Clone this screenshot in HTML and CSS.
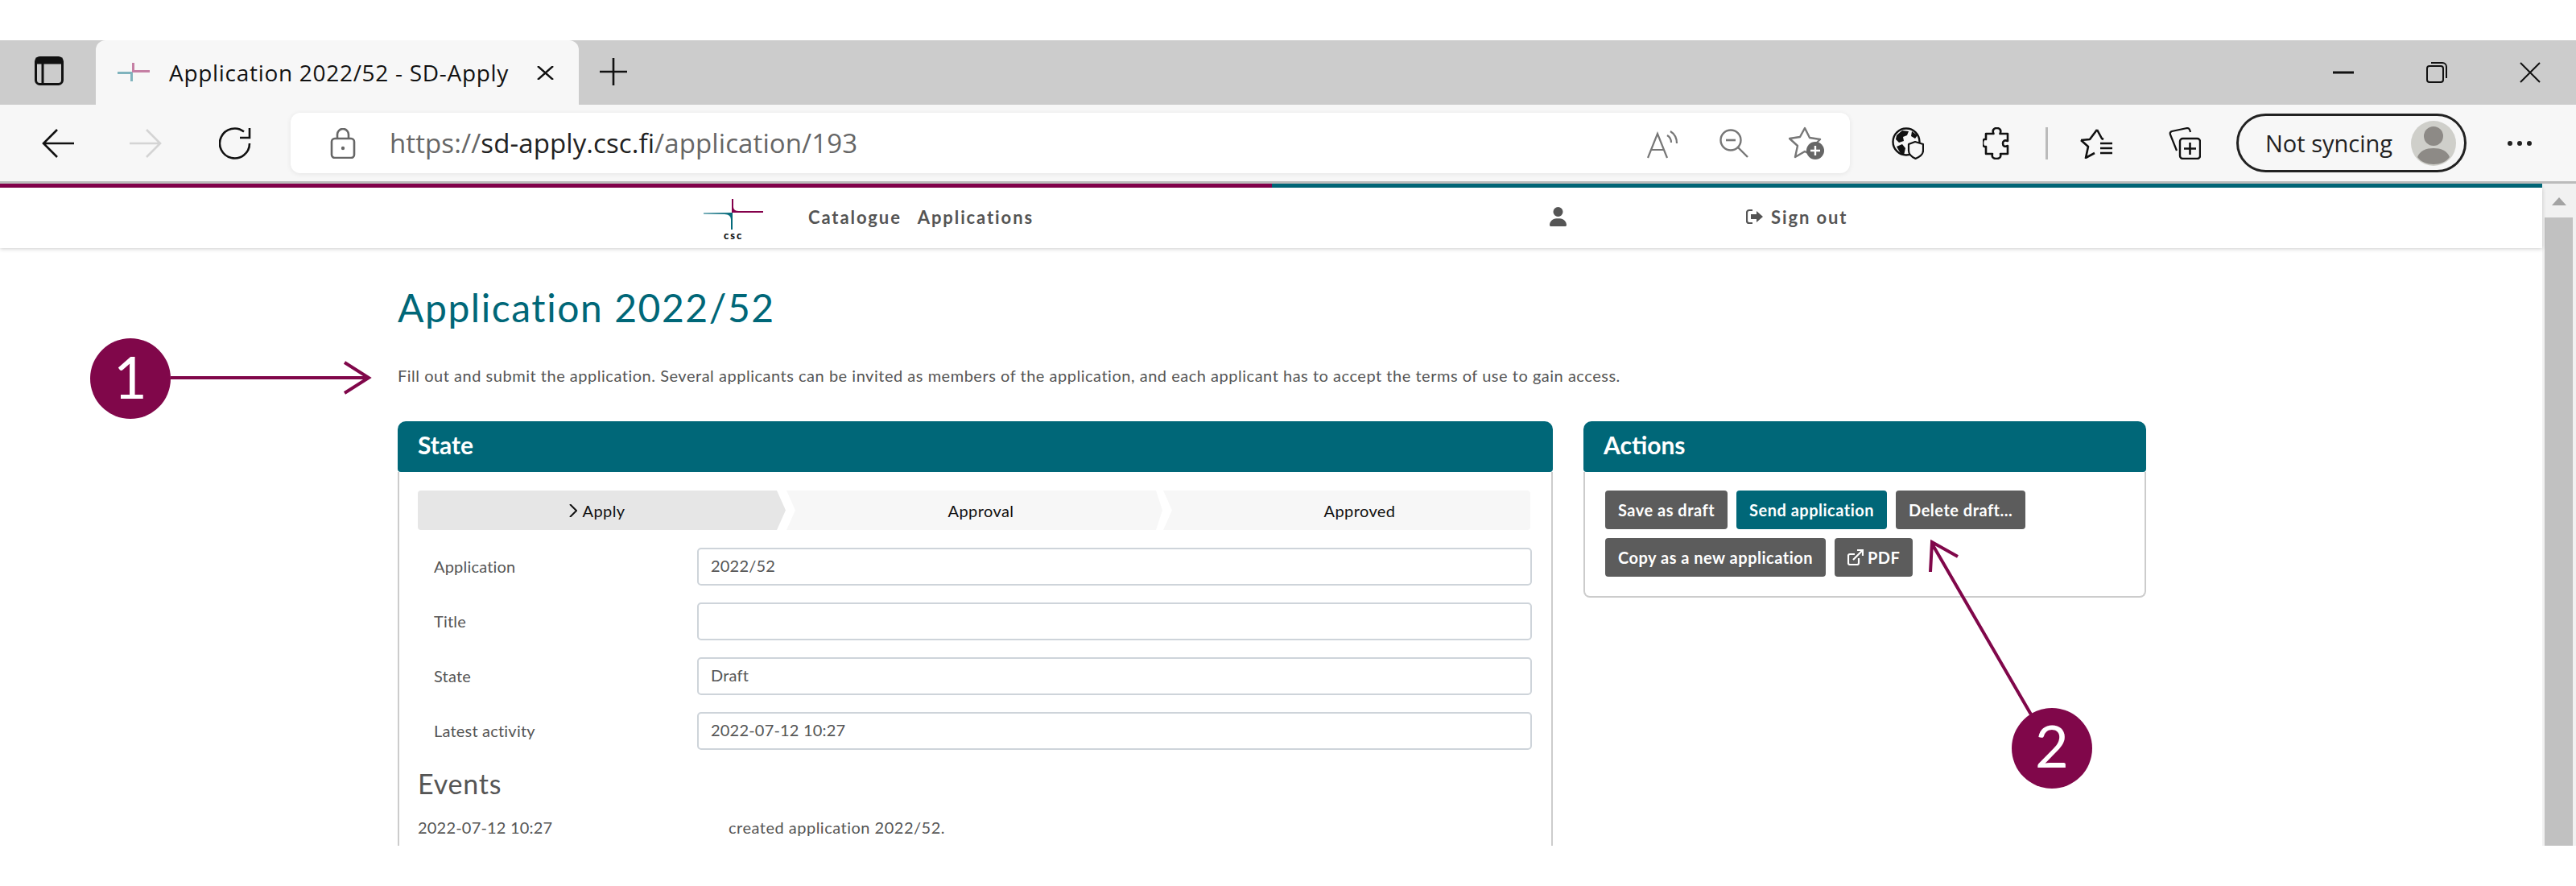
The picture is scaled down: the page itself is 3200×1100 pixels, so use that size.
FILE: index.html
```html
<!DOCTYPE html>
<html lang="en">
<head>
    <meta charset="UTF-8">
    <title>Application 2022/52 - SD-Apply</title>
    <link rel="stylesheet" href="styles.css">
</head>
<body>
    <div class="browser">
        <div class="tabstrip">
            <div class="tab-side">
                <svg class="ico" width="36" height="36" viewBox="0 0 36 36"><rect x="1.5" y="1.5" width="33" height="33" rx="5" fill="none" stroke="#111" stroke-width="3"/><rect x="1.5" y="1.5" width="33" height="8" fill="#111"/><path d="M10 9v25" stroke="#111" stroke-width="3"/></svg>
            </div>
            <div class="tab">
                <svg class="favicon" width="40" height="24" viewBox="0 0 40 24"><path d="M0 11h19v12h-3V14H0z" fill="#7fb3bd"/><path d="M18 0h3v9h19v3H18z" fill="#c57fa4"/></svg>
                <span class="tab-title">Application 2022/52 - SD-Apply</span>
                <svg class="tab-close" width="21" height="17" viewBox="0 0 21 17"><path d="M1 0l19 17M20 0L1 17" stroke="#111" stroke-width="2.4"/></svg>
            </div>
            <svg class="new-tab" width="34" height="34" viewBox="0 0 34 34"><path d="M0 17h34M17 0v34" stroke="#111" stroke-width="2.6"/></svg>
            <div class="win-controls">
                <svg width="26" height="4" viewBox="0 0 26 4"><path d="M0 2h26" stroke="#111" stroke-width="3"/></svg>
                <svg width="26" height="26" viewBox="0 0 26 26"><rect x="1" y="5" width="20" height="20" rx="3" fill="none" stroke="#111" stroke-width="2"/><path d="M6 1h14a5 5 0 0 1 5 5v14" fill="none" stroke="#111" stroke-width="2"/></svg>
                <svg width="26" height="26" viewBox="0 0 26 26"><path d="M1 1l24 24M25 1L1 25" stroke="#111" stroke-width="2"/></svg>
            </div>
        </div>
        <div class="toolbar">
            <svg class="back" width="40" height="36" viewBox="0 0 40 36"><path d="M40 18H2M19 1L2 18l17 17" fill="none" stroke="#111" stroke-width="2.6"/></svg>
            <svg class="forward" width="40" height="36" viewBox="0 0 40 36"><path d="M0 18h38M21 1l17 17-17 17" fill="none" stroke="#d4d4d4" stroke-width="2.6"/></svg>
            <svg class="reload" width="40" height="40" viewBox="0 0 40 40"><path d="M38 20A18.5 18.5 0 1 1 31 5.500" fill="none" stroke="#111" stroke-width="2.6"/><path d="M38 1v12H26" fill="none" stroke="#111" stroke-width="2.6"/></svg>
            <div class="address">
                <svg class="lock" width="32" height="38" viewBox="0 0 32 38"><rect x="2" y="13" width="28" height="24" rx="4" fill="none" stroke="#666" stroke-width="2.6"/><path d="M9 13V8a7 7 0 0 1 14 0v5" fill="none" stroke="#666" stroke-width="2.6"/><circle cx="16" cy="25" r="2.200" fill="#666"/></svg>
                <span class="url">https://<b>sd-apply.csc.fi</b>/application/193</span>
                <div class="address-icons">
                    <svg width="40" height="38" viewBox="0 0 40 38"><path d="M1 37L13 7l12 30M5 27h16" fill="none" stroke="#777" stroke-width="2.200"/><path d="M25 9q5 3 5 9M29 4q8 5 8 15" fill="none" stroke="#777" stroke-width="2.200"/></svg>
                    <svg width="36" height="36" viewBox="0 0 36 36"><circle cx="14" cy="14" r="12.500" fill="none" stroke="#777" stroke-width="2.400"/><path d="M23 23l12 12" stroke="#777" stroke-width="2.400"/><path d="M8 14h12" stroke="#777" stroke-width="2.600"/></svg>
                    <svg width="44" height="42" viewBox="0 0 44 42"><path d="M20 2l6 12 13 2-9 9 2 5-6 4-6-3-12 7 3-14-10-9 13-2z" fill="none" stroke="#777" stroke-width="2.400" stroke-linejoin="round"/><circle cx="33" cy="30" r="11" fill="#666"/><path d="M33 24v12M27 30h12" stroke="#fff" stroke-width="2.400"/></svg>
                </div>
            </div>
            <div class="tool-icons">
                <svg width="40" height="40" viewBox="0 0 40 40"><circle cx="18" cy="18" r="16.500" fill="none" stroke="#111" stroke-width="2.400"/><path d="M6 10l7-6 8 1-2 5-5 2 1 5-6 2-4-4zM6 24l7-3 4 5-2 9-5-4zM25 5l7 5-3 4-5-3z" fill="#111"/><path d="M29 18l10 3v8q0 6-9.500 10Q21 35 21 29v-8z" fill="#f7f7f7" stroke="#111" stroke-width="2.200" stroke-linejoin="round"/></svg>
                <svg width="34" height="40" viewBox="0 0 34 40"><path d="M11 8h2.500c-2-4 0-7 4-7s6 3 4 7H31v9c-4-1.500-6 0-6 3s2 5 6 3v10H22c1 4-1 6-5 6s-6-2-5-6H4v-9c-3 1-4-2-4-4.500S1 14 4 15V8z" fill="none" stroke="#111" stroke-width="2.600" stroke-linejoin="round"/></svg>
                <span class="sep"></span>
                <svg width="40" height="38" viewBox="0 0 40 38"><path d="M21 2l6 11 2 1M1 15l11-1 9-12M1 15l9 8-3 14 11-6" fill="none" stroke="#111" stroke-width="2.600" stroke-linejoin="round"/><path d="M25 19h15M25 25h15M25 31h15" stroke="#111" stroke-width="2.600"/></svg>
                <svg class="collections" width="40" height="40" viewBox="0 0 40 40"><path d="M10 29L2 9q-1-3 2-4l19-4q3 0 4 5" fill="none" stroke="#111" stroke-width="2.200"/><rect x="14" y="14" width="25" height="25" rx="3.500" fill="none" stroke="#111" stroke-width="2.400"/><path d="M26.500 19v15M19 26.500h15" stroke="#111" stroke-width="2.600"/></svg>
                <div class="sync-pill">
                    <span>Not syncing</span>
                    <svg width="58" height="58" viewBox="0 0 58 58"><circle cx="29" cy="29" r="28" fill="#cfcfca"/><circle cx="29" cy="20" r="12" fill="#8d8a86"/><path d="M9 46c3-8 11-11 20-11s17 3 20 11c-4 6-12 9-20 9S13 52 9 46z" fill="#8d8a86"/></svg>
                </div>
                <div class="more"><i></i><i></i><i></i></div>
            </div>
        </div>
    </div>

    <div class="viewport">
        <div class="page">
            <div class="color-bar"></div>
            <nav class="topnav">
                <div class="logo">
                    <svg width="74" height="38" viewBox="0 0 74 38"><defs>
                        <linearGradient id="tealH" x1="0" x2="1" y1="0" y2="0"><stop offset="0" stop-color="#7fb3bd"/><stop offset="1" stop-color="#006778"/></linearGradient>
                    </defs>
                        <path d="M0 17h36v21h-2V26q0-7-8-7H0z" fill="url(#tealH)"/>
                        <path d="M35 0h2v10q0 5 7 5h30v2H35z" fill="#84004b"/>
                    </svg>
                    <span class="logo-text">csc</span>
                </div>
                <a class="nav-link">Catalogue</a>
                <a class="nav-link">Applications</a>
                <svg class="user-ico" width="21" height="24" viewBox="0 0 448 512"><path fill="#555" d="M224 256A128 128 0 1 0 224 0a128 128 0 1 0 0 256zm-45.700 48C79.800 304 0 383.800 0 482.300 0 498.700 13.300 512 29.700 512h388.600c16.400 0 29.700-13.300 29.700-29.700C448 383.800 368.200 304 269.700 304z"/></svg>
                <a class="nav-link signout">
                    <svg width="22" height="20" viewBox="0 0 22 20"><path d="M8 2H4a3 3 0 0 0-3 3v10a3 3 0 0 0 3 3h4" fill="none" stroke="#555" stroke-width="2.200"/><path d="M13 3l8 7-8 7v-4H6V7h7z" fill="#555"/></svg>
                    Sign out
                </a>
            </nav>
            <main class="content">
                <h1>Application 2022/52</h1>
                <p class="intro">Fill out and submit the application. Several applicants can be invited as members of the application, and each applicant has to accept the terms of use to gain access.</p>
                <div class="columns">
                    <section class="panel state-panel">
                        <h2 class="panel-head">State</h2>
                        <div class="panel-body">
                            <div class="phases">
                                <div class="phase phase-active"><svg class="caret" width="10" height="16" viewBox="0 0 10 16"><path d="M1 0l8 8-8 8" fill="none" stroke="#111" stroke-width="2"/></svg>Apply</div>
                                <div class="phase phase-mid">Approval</div>
                                <div class="phase phase-last">Approved</div>
                            </div>
                            <div class="field"><label>Application</label><div class="value">2022/52</div></div>
                            <div class="field field-short"><label>Title</label><div class="value"></div></div>
                            <div class="field"><label>State</label><div class="value">Draft</div></div>
                            <div class="field"><label>Latest activity</label><div class="value">2022-07-12 10:27</div></div>
                            <h3>Events</h3>
                            <div class="event"><span class="event-time">2022-07-12 10:27</span><span class="event-text">created application 2022/52.</span></div>
                        </div>
                    </section>
                    <section class="panel actions-panel">
                        <h2 class="panel-head">Actions</h2>
                        <div class="panel-body actions">
                            <button class="btn">Save as draft</button>
                            <button class="btn btn-primary">Send application</button>
                            <button class="btn">Delete draft...</button>
                            <button class="btn">Copy as a new application</button>
                            <button class="btn"><svg width="20" height="20" viewBox="0 0 20 20"><path d="M14 11v6a2 2 0 0 1-2 2H3a2 2 0 0 1-2-2V8a2 2 0 0 1 2-2h6" fill="none" stroke="#fff" stroke-width="2.200"/><path d="M7 13L18 2M12 1h7v7" fill="none" stroke="#fff" stroke-width="2.200"/></svg>PDF</button>
                        </div>
                    </section>
                </div>
            </main>
        </div>
        <div class="scrollbar">
            <div class="scroll-up"></div>
            <div class="scroll-thumb"></div>
        </div>
    </div>

    <svg class="callouts" width="3200" height="1100" viewBox="0 0 3200 1100">
        <path d="M212 469H456M428 450l30 19-30 19" fill="none" stroke="#80074a" stroke-width="4"/>
        <path d="M2523 887L2400 675M2398 710l2-37 32 18" fill="none" stroke="#80074a" stroke-width="4"/>
        <circle cx="162" cy="470" r="50" fill="#80074a"/>
        <circle cx="2549" cy="929" r="50" fill="#80074a"/>
        <text x="162" y="495" class="callout-num">1</text>
        <text x="2549" y="953" class="callout-num">2</text>
    </svg>
</body>
</html>
```

FILE: styles.css
```css
* {
    box-sizing: border-box;
}
body {
    margin: 0;
    height: 1100px;
    background-color: #fff;
    color: #555;
    font-family: Lato, Arial, sans-serif;
    overflow: hidden;
    position: relative;
}
svg {
    display: block;
    flex: none;
}

/* browser chrome */
.browser {
    padding-top: 50px;
    font-family: "Open Sans", Arial, sans-serif;
}
.tabstrip {
    display: flex;
    align-items: center;
    height: 80px;
    background-color: #ccc;
}
.tab-side {
    width: 119px;
    padding: 0 0 4px 43px;
}
.tab {
    display: flex;
    align-items: center;
    width: 600px;
    height: 80px;
    padding: 0 31px 0 27px;
    background-color: #f7f7f7;
    border-radius: 12px 12px 0 0;
}
.favicon {
    margin-right: 24px;
}
.tab-title {
    flex: 1;
    font-size: 28px;
    letter-spacing: 0.7px;
    color: #111;
    white-space: nowrap;
}
.new-tab {
    margin: 0 0 2px 26px;
}
.win-controls {
    display: flex;
    align-items: center;
    gap: 90px;
    margin-left: auto;
    padding-right: 44px;
}
.toolbar {
    display: flex;
    align-items: center;
    height: 95px;
    padding: 0 0 0 52px;
    background-color: #f7f7f7;
}
.back {
    margin-right: 69px;
}
.forward {
    margin-right: 71px;
}
.reload {
    margin-right: 49px;
}
.address {
    display: flex;
    align-items: center;
    width: 1937px;
    height: 75px;
    padding: 0 32px 0 49px;
    background-color: #fff;
    border-radius: 12px;
    box-shadow: 0 1px 6px rgba(0, 0, 0, 0.08);
}
.lock {
    margin-right: 42px;
}
.url {
    font-size: 33px;
    letter-spacing: 0.1px;
    color: #666;
    white-space: nowrap;
}
.url b {
    font-weight: 400;
    color: #222;
}
.address-icons {
    display: flex;
    align-items: center;
    gap: 50px;
    margin-left: auto;
}
.tool-icons {
    display: flex;
    align-items: center;
    margin-left: 52px;
}
.tool-icons > svg:nth-child(1) {
    margin-right: 73px;
}
.sep {
    width: 3px;
    height: 40px;
    margin: 0 40px 0 44px;
    background-color: #bbb;
}
.collections {
    margin: 0 44px 0 70px;
}
.sync-pill {
    display: flex;
    align-items: center;
    gap: 22px;
    width: 286px;
    height: 73px;
    padding-left: 33px;
    border: 3px solid #222;
    border-radius: 37px;
    font-size: 29px;
    color: #222;
    white-space: nowrap;
}
.more {
    display: flex;
    gap: 6px;
    margin-left: 51px;
}
.more i {
    width: 6px;
    height: 6px;
    border-radius: 50%;
    background-color: #222;
}

/* page inside the browser */
.viewport {
    display: flex;
    height: 825px;
    overflow: hidden;
    border-top: 3px solid #bbb;
}
.page {
    width: 3158px;
    flex: none;
}
.color-bar {
    height: 5px;
    background: linear-gradient(to right, #84004b 0, #84004b 1580px, #006778 1580px);
}
.topnav {
    display: flex;
    align-items: center;
    height: 75px;
    padding-left: 874px;
    background-color: #fff;
    box-shadow: 0 1px 5px rgba(0, 0, 0, 0.2);
    position: relative;
}
.logo {
    width: 130px;
    padding-top: 4px;
}
.logo-text {
    display: block;
    margin: 0 0 0 25px;
    font-size: 13px;
    line-height: 14px;
    font-weight: 900;
    letter-spacing: 2px;
    color: #111;
}
.nav-link {
    margin: 0 20px 3px 0;
    font-size: 22px;
    font-weight: 700;
    letter-spacing: 1.9px;
    color: #555;
}
.user-ico {
    margin: 0 0 3px 621px;
}
.signout {
    display: flex;
    align-items: center;
    gap: 9px;
    margin-left: 223px;
}
.content {
    padding: 44px 0 0 494px;
}
h1 {
    margin: 0;
    font-size: 48px;
    line-height: 60px;
    font-weight: 400;
    letter-spacing: 1.55px;
    color: #006778;
}
.intro {
    margin: 42px 0 0;
    font-size: 20px;
    line-height: 24px;
    letter-spacing: 0.52px;
}
.columns {
    display: flex;
    align-items: flex-start;
    gap: 38px;
    margin-top: 45px;
}
.panel-head {
    margin: 0;
    height: 63px;
    padding: 0 25px;
    background-color: #006778;
    border-radius: 10px 10px 4px 4px;
    color: #fff;
    font-size: 30px;
    font-weight: 700;
    line-height: 58px;
}
.panel-body {
    background-color: #fff;
    border: 2px solid #ccc;
    border-top: 0;
    border-radius: 0 0 8px 8px;
}
.state-panel {
    width: 1435px;
}
.state-panel .panel-body {
    height: 500px;
    padding: 23px 24px 0 23px;
}
.phases {
    display: grid;
    grid-template-columns: 457px 467px 1fr;
    column-gap: 1px;
    height: 49px;
    margin: 0 2px 22px 0;
}
.phase {
    display: flex;
    align-items: center;
    justify-content: center;
    font-size: 20px;
    letter-spacing: 0.4px;
    color: #111;
    background-color: #f7f7f7;
}
.phase-active {
    padding-right: 12px;
    background-color: #e6e6e6;
    border-radius: 4px 0 0 4px;
    clip-path: polygon(0 0, calc(100% - 11px) 0, 100% 50%, calc(100% - 11px) 100%, 0 100%);
}
.phase-mid {
    padding-left: 16px;
    clip-path: polygon(0 0, calc(100% - 8px) 0, 100% 50%, calc(100% - 8px) 100%, 0 100%, 11px 50%);
}
.phase-last {
    padding-left: 32px;
    border-radius: 0 4px 4px 0;
    clip-path: polygon(0 0, 100% 0, 100% 100%, 0 100%, 11px 50%);
}
.caret {
    margin-right: 7px;
}
.field {
    display: flex;
    align-items: center;
    height: 47px;
    margin-bottom: 21px;
    padding-left: 20px;
    font-size: 20px;
    letter-spacing: 0.2px;
}
.field label {
    width: 327px;
    padding-bottom: 2px;
}
.value {
    flex: 1;
    height: 100%;
    padding: 0 15px;
    line-height: 41px;
    border: 2px solid #ced4da;
    border-radius: 5px;
}
h3 {
    margin: -1px 0 0;
    font-size: 34px;
    line-height: 44px;
    font-weight: 400;
    letter-spacing: 0.8px;
}
.event {
    display: flex;
    margin-top: 20px;
    font-size: 20px;
    letter-spacing: 0.2px;
}
.event-time {
    width: 386px;
}
.event-text {
    letter-spacing: 0.5px;
}
.actions-panel {
    width: 699px;
}
.actions {
    display: flex;
    flex-wrap: wrap;
    align-content: flex-start;
    gap: 11px;
    height: 156px;
    padding: 23px 60px 0 25px;
}
.btn {
    display: flex;
    align-items: center;
    gap: 5px;
    height: 48px;
    padding: 0 16px;
    border: 0;
    border-radius: 4px;
    background-color: #5c5c5c;
    color: #fff;
    font-family: Lato, Arial, sans-serif;
    font-size: 20px;
    font-weight: 700;
    letter-spacing: 0.5px;
}
.btn-primary {
    background-color: #006778;
}
.scrollbar {
    flex: 1;
    padding: 0 4px 0 3px;
    background-color: #f1f1f1;
}
.scroll-up {
    height: 42px;
    padding-top: 17px;
}
.scroll-up::before {
    content: "";
    display: block;
    width: 0;
    margin: 0 auto;
    border: 9px solid transparent;
    border-top: 0;
    border-bottom: 10px solid #a3a3a3;
}
.scroll-thumb {
    height: 100%;
    background-color: #c1c1c1;
}

/* numbered arrows drawn over the screenshot */
.callouts {
    position: absolute;
    top: 0;
    left: 0;
}
.callout-num {
    font-family: Lato, sans-serif;
    font-size: 72px;
    fill: #fff;
    text-anchor: middle;
}
```
